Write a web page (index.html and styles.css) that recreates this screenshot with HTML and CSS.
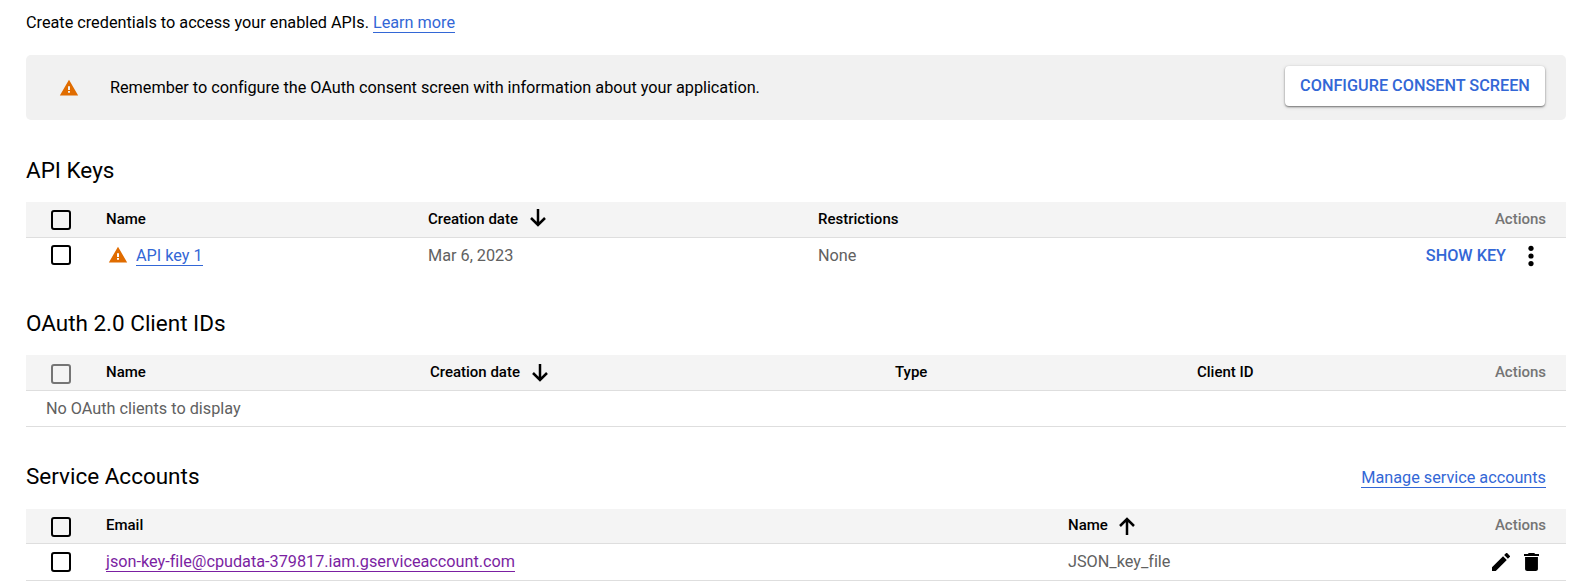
FILE: index.html
```html
<!DOCTYPE html>
<html lang="en">
<head>
<meta charset="utf-8">
<title>Credentials</title>
<link rel="stylesheet" href="styles.css">
</head>
<body>
<svg class="defs" width="0" height="0">
  <symbol id="warn" viewBox="0 0 24 24"><path d="M1 21h22L12 2 1 21zm12.200-3.200h-2.400v-2.200h2.400v2.200zm0-3.400h-2.400v-4.600h2.400v4.600z"/></symbol>
  <symbol id="down" viewBox="0 0 16 18"><path d="M8 0V15.500M1 9l7 7 7-7" fill="none" stroke="currentColor" stroke-width="2.500"/></symbol>
  <symbol id="up" viewBox="0 0 16 18"><path d="M8 18V2.500M1 9l7-7 7 7" fill="none" stroke="currentColor" stroke-width="2.500"/></symbol>
</svg>
<main class="page">
  <p class="intro">Create credentials to access your enabled APIs. <a class="link" href="#">Learn more</a></p>
  <div class="banner">
    <svg class="warn"><use href="#warn"/></svg>
    <span class="banner-text">Remember to configure the OAuth consent screen with information about your application.</span>
    <button class="button">CONFIGURE CONSENT SCREEN</button>
  </div>

  <section class="section keys">
    <div class="heading"><h2>API Keys</h2></div>
    <div class="row head">
      <span class="check"></span><span>Name</span>
      <span class="sort">Creation date<svg class="arrow"><use href="#down"/></svg></span>
      <span>Restrictions</span><span class="actions">Actions</span>
    </div>
    <div class="row">
      <span class="check"></span>
      <span class="key-name"><svg class="warn"><use href="#warn"/></svg><a class="link" href="#">API key 1</a></span>
      <span>Mar 6, 2023</span><span>None</span>
      <span class="actions"><a class="show" href="#">SHOW KEY</a><svg class="dots" viewBox="0 0 6 22"><circle cx="3" cy="3.300" r="2.600"/><circle cx="3" cy="11" r="2.600"/><circle cx="3" cy="18.600" r="2.600"/></svg></span>
    </div>
  </section>

  <section class="section clients">
    <div class="heading"><h2>OAuth 2.0 Client IDs</h2></div>
    <div class="row head">
      <span class="check disabled"></span><span>Name</span>
      <span class="sort">Creation date<svg class="arrow"><use href="#down"/></svg></span>
      <span>Type</span><span>Client ID</span><span class="actions">Actions</span>
    </div>
    <div class="empty">No OAuth clients to display</div>
  </section>

  <section class="section accounts">
    <div class="heading"><h2>Service Accounts</h2><a class="link" href="#">Manage service accounts</a></div>
    <div class="row head">
      <span class="check"></span><span>Email</span>
      <span class="sort">Name<svg class="arrow"><use href="#up"/></svg></span>
      <span class="actions">Actions</span>
    </div>
    <div class="row">
      <span class="check"></span>
      <span><a class="link visited" href="#">json-key-file@cpudata-379817.iam.gserviceaccount.com</a></span>
      <span>JSON_key_file</span>
      <span class="actions icons">
        <svg class="edit" viewBox="3 3 18 18"><path d="M3 17.250V21h3.750L17.810 9.940l-3.750-3.750L3 17.250zM20.710 7.040a1 1 0 0 0 0-1.410l-2.340-2.340a1 1 0 0 0-1.410 0l-1.830 1.830 3.750 3.750 1.830-1.830z"/></svg>
        <svg class="trash" viewBox="5 3 14 18" preserveAspectRatio="none"><path d="M6 19c0 1.100.9 2 2 2h8c1.100 0 2-.9 2-2V7H6v12zM19 4h-3.500l-1-1h-5l-1 1H5v2h14V4z"/></svg>
      </span>
    </div>
  </section>
</main>
</body>
</html>
```
FILE: styles.css
```css
* { box-sizing: border-box; }
body { margin: 0; background: #fff; overflow: hidden; }
.defs { display: none; }
.page {
  padding: 0 5px 0 26px;
  font: 400 16.25px/20px Roboto, "Liberation Sans", sans-serif;
  letter-spacing: -0.01px;
  color: #000;
}
svg { display: block; flex: none; }
.intro { margin: 0; height: 55px; line-height: 45px; }
.link {
  color: #3367d6;
  text-decoration: none;
  line-height: 20px;
  border-bottom: 1px solid #3367d6;
}
.link.visited { color: #7b1fa2; border-color: #7b1fa2; }

.banner {
  display: flex;
  align-items: center;
  height: 65px;
  padding: 0 21px 0 33px;
  background: #f1f1f1;
  border-radius: 5px;
}
.warn { width: 20px; height: 20px; fill: #e06c00; }
.banner .warn { margin-left: -0.5px; }
.banner-text { flex: 1; margin-left: 31.5px; letter-spacing: -0.02px; }
.button {
  width: 260px;
  height: 40px;
  margin-bottom: 3px;
  padding: 0;
  border: 0;
  border-radius: 4px;
  background: #fff;
  box-shadow: 0 1px 2px rgba(0, 0, 0, .5), 0 1px 5px rgba(0, 0, 0, .1);
  color: #3367d6;
  font: 500 16.25px/38px Roboto, sans-serif;
}

.heading {
  display: flex;
  justify-content: space-between;
  align-items: center;
  height: 30px;
  padding-right: 20px;
}
h2 { margin: 0; font-size: 22.5px; font-weight: 400; line-height: 30px; }
.keys .heading { margin: 35px 0 17px; }
.clients .heading { margin: 36px 0 17px; }
.accounts .heading { margin: 34px 0 18px; }
.accounts .heading .link { margin-top: 3px; line-height: 19px; }

.row {
  display: grid;
  align-items: center;
  height: 34px;
  padding: 0 20px 0 25px;
  color: #616161;
}
.row.head {
  height: 36px;
  background: #f4f4f4;
  border-bottom: 1px solid #dedede;
  color: #000;
  font-size: 15px;
  font-weight: 500;
  line-height: 18px;
}
.row.head > span:not(.check) { padding-bottom: 2px; }
.keys .row { grid-template-columns: 55px 322px 390px 1fr auto; }
.keys .row:not(.head) > span:not(.check) { padding-top: 1px; }
.keys .row:not(.head) .link { line-height: 19px; }
.clients .row { grid-template-columns: 55px 324px 465px 302px 1fr auto; }
.accounts .row { grid-template-columns: 55px 962px 1fr auto; }
.accounts .row { height: 37px; border-bottom: 1px solid #dedede; }
.accounts .row.head { height: 35px; }

.check { width: 20px; height: 20px; border: 2px solid #000; border-radius: 3px; }
.check.disabled { border-color: #757575; }
.clients .check { margin-top: 2px; }
.accounts .head .check { margin-top: 2px; }
.sort { display: flex; align-items: center; gap: 12px; }
.accounts .sort { gap: 11.5px; }
.arrow { width: 16px; height: 18px; margin-bottom: -2px; }
.keys .arrow { margin-bottom: 1px; }
.head .actions { color: #757575; }
.actions { display: flex; align-items: center; }
.key-name { display: flex; align-items: center; gap: 8px; padding-left: 2px; }
.key-name .warn { margin-bottom: 2px; }
.show { color: #3367d6; font-weight: 500; text-decoration: none; }
.dots { width: 6px; height: 22px; margin: 0 12px 0 22px; }
.empty {
  height: 36px;
  padding-left: 20px;
  line-height: 35px;
  border-bottom: 1px solid #dedede;
  color: #616161;
}
.icons { gap: 14px; padding-right: 7px; }
.edit { width: 18px; height: 18px; }
.trash { width: 15px; height: 18px; }
```
